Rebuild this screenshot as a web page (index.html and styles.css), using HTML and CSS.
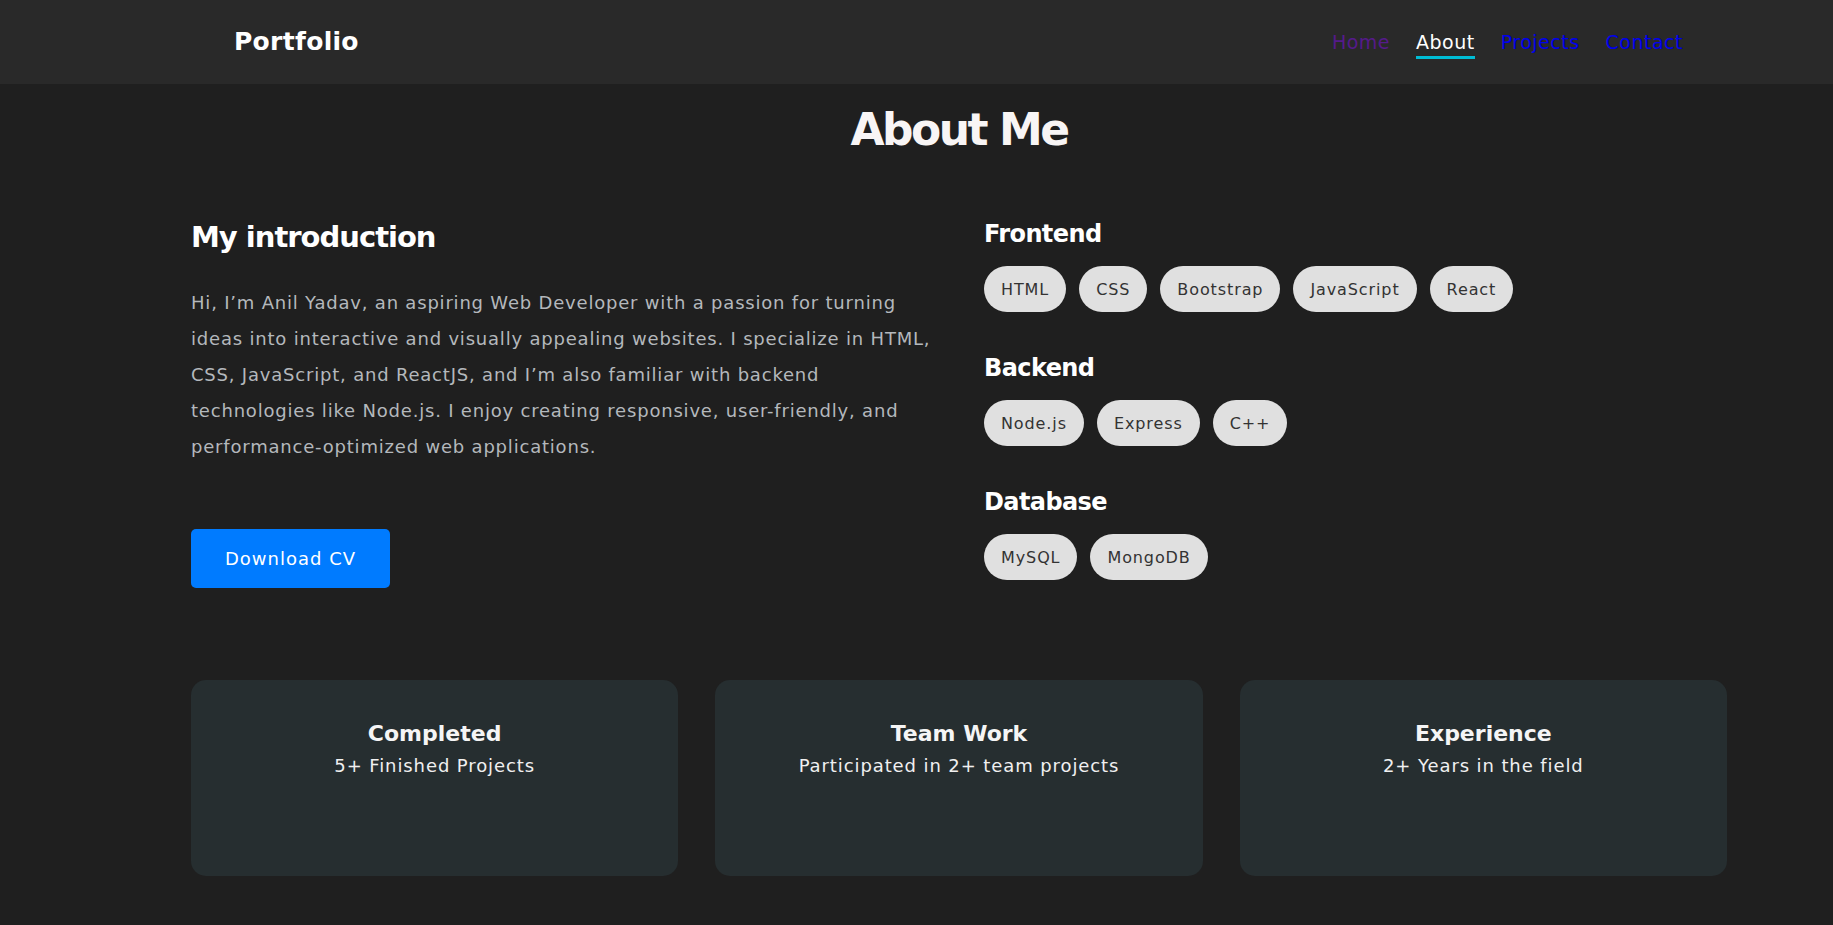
FILE: index.html
```html
<!DOCTYPE html>
<html lang="en">
<head>
<meta charset="utf-8">
<title>Portfolio</title>
<link rel="stylesheet" href="styles.css">
</head>
<body>
<header class="navbar">
  <div class="logo">Portfolio</div>
  <nav class="nav-links">
    <a href="#home" class="link visited">Home</a>
    <a href="#about" class="link active">About</a>
    <a href="#projects" class="link">Projects</a>
    <a href="#contact" class="link">Contact</a>
  </nav>
</header>
<main class="about">
  <h2 class="section-title">About Me</h2>
  <div class="about-grid">
    <div class="intro">
      <h3 class="intro-title">My introduction</h3>
      <p class="intro-text">Hi, I’m Anil Yadav, an aspiring Web Developer with a passion for turning ideas into interactive and visually appealing websites. I specialize in HTML, CSS, JavaScript, and ReactJS, and I’m also familiar with backend technologies like Node.js. I enjoy creating responsive, user-friendly, and performance-optimized web applications.</p>
      <a class="btn" href="#">Download CV</a>
    </div>
    <div class="skills">
      <div class="skill-group">
        <h4 class="skill-title">Frontend</h4>
        <div class="pills">
          <span class="pill">HTML</span>
          <span class="pill">CSS</span>
          <span class="pill">Bootstrap</span>
          <span class="pill">JavaScript</span>
          <span class="pill">React</span>
        </div>
      </div>
      <div class="skill-group">
        <h4 class="skill-title">Backend</h4>
        <div class="pills">
          <span class="pill">Node.js</span>
          <span class="pill">Express</span>
          <span class="pill">C++</span>
        </div>
      </div>
      <div class="skill-group">
        <h4 class="skill-title">Database</h4>
        <div class="pills">
          <span class="pill">MySQL</span>
          <span class="pill">MongoDB</span>
        </div>
      </div>
    </div>
  </div>
  <div class="cards">
    <div class="card">
      <h3 class="card-title">Completed</h3>
      <p class="card-text">5+ Finished Projects</p>
    </div>
    <div class="card">
      <h3 class="card-title">Team Work</h3>
      <p class="card-text">Participated in 2+ team projects</p>
    </div>
    <div class="card">
      <h3 class="card-title">Experience</h3>
      <p class="card-text">2+ Years in the field</p>
    </div>
  </div>
</main>
</body>
</html>
```

FILE: styles.css
```css
* { box-sizing: border-box; }

html, body {
  margin: 0;
  padding: 0;
}

body {
  background: #1f1f1f;
  color: #ffffff;
  font-family: "DejaVu Sans", "Open Sans", sans-serif;
  overflow: hidden;
}

.navbar {
  height: 84px;
  background: #292929;
  display: flex;
  align-items: center;
  justify-content: space-between;
  padding: 0 150px 0 234px;
}

.logo {
  font-size: 25px;
  font-weight: 700;
  color: #ffffff;
  line-height: 32px;
  letter-spacing: 0.3px;
}

.nav-links {
  display: flex;
  gap: 26px;
  align-items: center;
  padding-top: 5px;
}

.link {
  font-size: 19px;
  line-height: 24px;
  letter-spacing: 0.5px;
  text-decoration: none;
  color: #0000ee;
  border-bottom: 3px solid transparent;
  padding-bottom: 2px;
}

.link.visited { color: #551a8b; }

.link.active {
  color: #ffffff;
  border-bottom-color: #00bcd4;
}

.about {
  padding: 0 106px 0 191px;
}

.section-title {
  margin: 18px 0 0;
  text-align: center;
  font-size: 44px;
  line-height: 56px;
  font-weight: 700;
  letter-spacing: -2.5px;
  color: #f8f5f5;
}

.about-grid {
  display: grid;
  grid-template-columns: 752px 1fr;
  gap: 41px;
  margin-top: 59px;
}

.intro-title {
  margin: 0;
  font-size: 29px;
  line-height: 40px;
  font-weight: 700;
  letter-spacing: -1px;
}

.intro-text {
  margin: 28px 0 0;
  font-size: 18px;
  line-height: 36px;
  letter-spacing: 0.8px;
  color: #b4b8bc;
}

.btn {
  display: inline-block;
  margin-top: 64px;
  background: #007bff;
  color: #ffffff;
  text-decoration: none;
  font-size: 18px;
  line-height: 27px;
  letter-spacing: 1px;
  padding: 16px 34px;
  border-radius: 5px;
}

.skills {
  display: flex;
  flex-direction: column;
  gap: 40px;
  padding-top: 1px;
}

.skill-title {
  margin: 0 0 16px;
  font-size: 24px;
  line-height: 32px;
  font-weight: 700;
  letter-spacing: -0.6px;
}

.pills {
  display: flex;
  flex-wrap: wrap;
  gap: 13px;
}

.pill {
  display: inline-flex;
  align-items: center;
  height: 46px;
  padding: 0 17px;
  border-radius: 23px;
  background: #e0e0e0;
  color: #333333;
  font-size: 16px;
  letter-spacing: 0.9px;
}

.cards {
  display: grid;
  grid-template-columns: repeat(3, 1fr);
  gap: 37px;
  margin-top: 92px;
}

.card {
  height: 196px;
  background: #262e30;
  border-radius: 15px;
  padding-top: 38px;
  text-align: center;
}

.card-title {
  margin: 0;
  font-size: 22px;
  line-height: 32px;
  font-weight: 700;
  color: #f5f5f5;
}

.card-text {
  margin: 2px 0 0;
  font-size: 18px;
  line-height: 28px;
  letter-spacing: 0.9px;
  color: #f0f0f0;
}
```
